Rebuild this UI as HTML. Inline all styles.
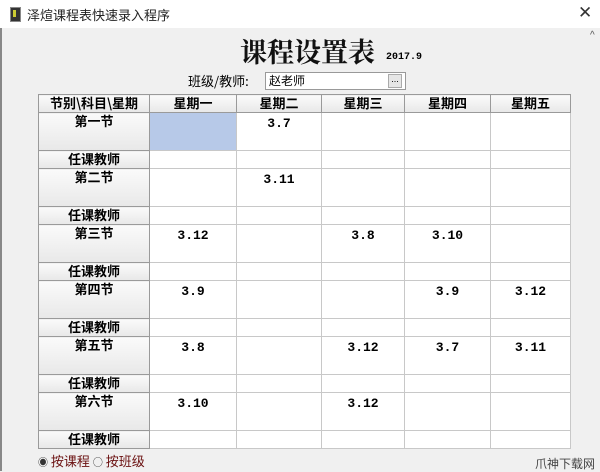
<!DOCTYPE html><html><head><meta charset="utf-8"><style>
body{margin:0;width:600px;height:471px;overflow:hidden;background:#f0f0f0;font-family:"Liberation Sans","Noto Sans CJK SC",sans-serif;position:relative}
.tb{position:absolute;left:0;top:0;width:600px;height:28px;background:#fff;}
.a{position:absolute;white-space:nowrap}
table{position:absolute;left:38px;top:94px;border-collapse:collapse;background:#fff;table-layout:fixed}
td{border:1px solid #c8c8c8;padding:0;font-weight:bold;font-size:13px;line-height:15px;text-align:center;vertical-align:top;font-family:"Noto Sans CJK SC",sans-serif;overflow:hidden;box-sizing:border-box}
td.h{background:linear-gradient(#fafafa,#e8e8e8);border-color:#9a9a9a}
td.n{font-family:"Liberation Mono",monospace;font-size:13px;padding-top:3px}
tr.b td{height:38px}
tr.s td{height:18px}
</style></head><body>
<div class="tb"></div>
<div class="a" style="left:10px;top:7px;width:9px;height:13px;background:#333;border:1px solid #888"></div>
<div class="a" style="left:13px;top:10px;width:3px;height:7px;background:#cc3"></div>
<div class="a" style="left:27px;top:5px;font-size:13px;color:#222;font-family:'Noto Sans CJK SC',sans-serif">泽煊课程表快速录入程序</div>
<div class="a" style="left:578px;top:3px;font-size:17px;color:#333">✕</div>
<div class="a" style="left:0;top:28px;width:2px;height:443px;background:#888"></div>
<div class="a" style="left:590px;top:30px;font-size:10px;color:#555">^</div>
<div class="a" style="left:240px;top:36px;font-size:27px;line-height:30px;color:#111;font-family:'Noto Serif CJK SC',serif;font-weight:bold">课程设置表</div>
<div class="a" style="left:386px;top:52px;font-size:10px;font-weight:bold;font-family:'Liberation Mono',monospace">2017.9</div>
<div class="a" style="left:188px;top:71px;font-size:13px;font-family:'Noto Sans CJK SC',sans-serif">班级/教师:</div>
<div class="a" style="left:265px;top:72px;width:136px;height:16px;background:#fff;border:1px solid #999;font-size:12px;line-height:16px;padding-left:3px;font-family:'Noto Sans CJK SC',sans-serif">赵老师</div>
<div class="a" style="left:388px;top:74px;width:12px;height:12px;background:#e6e6e6;border:1px solid #aaa;font-size:9px;line-height:8px;text-align:center">...</div>
<table>
<colgroup><col style="width:111px"><col style="width:87px"><col style="width:85px"><col style="width:83px"><col style="width:86px"><col style="width:80px"></colgroup>
<tr class="s"><td class="h">节别\科目\星期</td><td class="h">星期一</td><td class="h">星期二</td><td class="h">星期三</td><td class="h">星期四</td><td class="h">星期五</td></tr>
<tr class="b"><td class="h">第一节</td><td style="background:#b7c9e8"></td><td class="n">3.7</td><td></td><td></td><td></td></tr>
<tr class="s"><td class="h">任课教师</td><td></td><td></td><td></td><td></td><td></td></tr>
<tr class="b"><td class="h">第二节</td><td></td><td class="n">3.11</td><td></td><td></td><td></td></tr>
<tr class="s"><td class="h">任课教师</td><td></td><td></td><td></td><td></td><td></td></tr>
<tr class="b"><td class="h">第三节</td><td class="n">3.12</td><td></td><td class="n">3.8</td><td class="n">3.10</td><td></td></tr>
<tr class="s"><td class="h">任课教师</td><td></td><td></td><td></td><td></td><td></td></tr>
<tr class="b"><td class="h">第四节</td><td class="n">3.9</td><td></td><td></td><td class="n">3.9</td><td class="n">3.12</td></tr>
<tr class="s"><td class="h">任课教师</td><td></td><td></td><td></td><td></td><td></td></tr>
<tr class="b"><td class="h">第五节</td><td class="n">3.8</td><td></td><td class="n">3.12</td><td class="n">3.7</td><td class="n">3.11</td></tr>
<tr class="s"><td class="h">任课教师</td><td></td><td></td><td></td><td></td><td></td></tr>
<tr class="b"><td class="h">第六节</td><td class="n">3.10</td><td></td><td class="n">3.12</td><td></td><td></td></tr>
<tr class="s"><td class="h">任课教师</td><td></td><td></td><td></td><td></td><td></td></tr>
</table>
<div class="a" style="left:38px;top:452px;font-size:13px;line-height:18px;color:#6a1010;font-family:'Noto Sans CJK SC',sans-serif"><span style="color:#333;font-size:10px">◉</span> 按课程 <span style="color:#333;font-size:10px">○</span> 按班级</div>
<div class="a" style="left:535px;top:455px;font-size:12px;color:#444;font-family:'Noto Sans CJK SC',sans-serif">爪神下载网</div>
</body></html>
